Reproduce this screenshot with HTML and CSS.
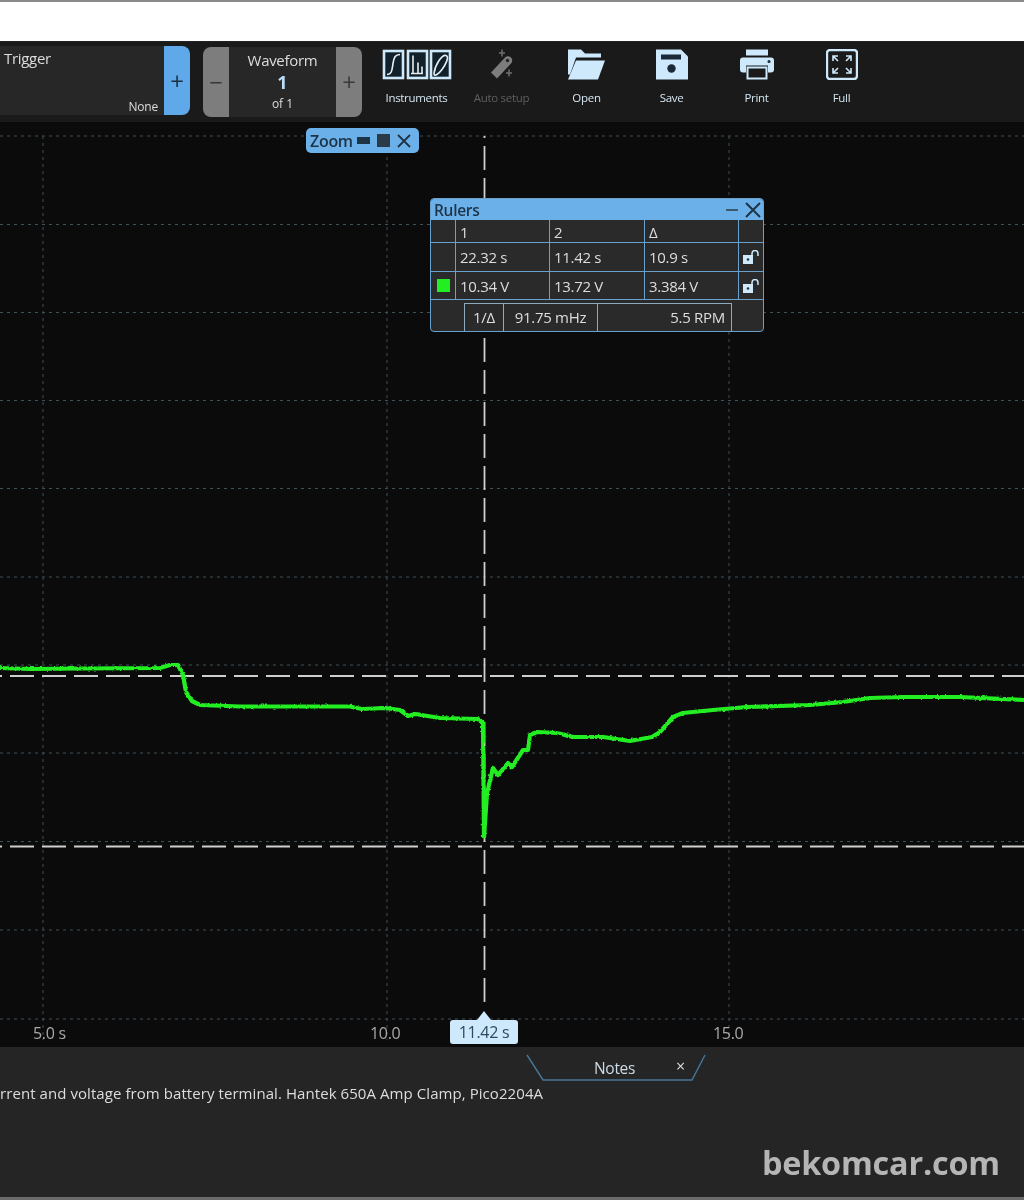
FILE: index.html
```html
<!DOCTYPE html>
<html lang="en">
<head>
  <meta charset="UTF-8">
  <title>Scope capture</title>
  <link rel="stylesheet" href="styles.css">
</head>
<body>
  <div class="top-strip"></div>

  <div class="toolbar">
    <div class="trigger">
      <div class="trigger-body">
        <span class="trigger-title">Trigger</span>
        <span class="trigger-value">None</span>
      </div>
      <button class="step step-blue">+</button>
    </div>

    <div class="waveform">
      <button class="step step-left">&minus;</button>
      <div class="waveform-body">
        <span class="waveform-title">Waveform</span>
        <span class="waveform-num">1</span>
        <span class="waveform-of">of 1</span>
      </div>
      <button class="step step-right">+</button>
    </div>

    <div class="tools">
      <div class="tool">
        <svg width="70" height="30" viewBox="0 0 70 30">
          <g fill="#12202a" stroke="#cde9fb" stroke-width="2.600">
            <rect x="2" y="1.500" width="19" height="27"/>
            <rect x="26" y="1.500" width="19" height="27"/>
            <rect x="49" y="1.500" width="19" height="27"/>
          </g>
          <g fill="none" stroke="#e4eef5" stroke-width="1.600">
            <path d="M5 25C10 25 10 20 11 14S13 5 18 5"/>
            <path d="M29 24H41M31 24V6M36 24V13M40 24V17"/>
            <path d="M52 24C53 15 60 5 64 6S63 16 60 20 52 28 52 24Z"/>
          </g>
        </svg>
        <span class="tool-label">Instruments</span>
      </div>
      <div class="tool tool-off">
        <svg width="30" height="30" viewBox="0 0 30 30">
          <path d="M4 23L18 8a3 3 0 0 1 6 6L10 29Z" fill="#7d7d7d"/>
          <circle cx="20.500" cy="11" r="1.700" fill="#222"/>
          <path d="M15 0V7M12 3.500H18M22 20V27M19 23.500H25" stroke="#6f6f6f" stroke-width="1.500" fill="none"/>
        </svg>
        <span class="tool-label">Auto setup</span>
      </div>
      <div class="tool">
        <svg width="37" height="30" viewBox="0 0 37 30">
          <path d="M0 0H13L17 4H33V8H8L2 25H0Z" fill="#cde9fb"/>
          <path d="M8 11H37L30 30H0Z" fill="#cde9fb"/>
        </svg>
        <span class="tool-label">Open</span>
      </div>
      <div class="tool">
        <svg width="32" height="30" viewBox="0 0 32 30">
          <path d="M0 0H25L32 7V30H0Z" fill="#cde9fb"/>
          <rect x="5" y="5" width="20" height="5" fill="#1a2a36"/>
          <circle cx="15.500" cy="19" r="4.200" fill="#1a2a36"/>
        </svg>
        <span class="tool-label">Save</span>
      </div>
      <div class="tool">
        <svg width="34" height="30" viewBox="0 0 34 30">
          <rect x="6" y="0" width="22" height="6" fill="#cde9fb"/>
          <path d="M3 8H31a3 3 0 0 1 3 3V20a3 3 0 0 1-3 3H28V16H6V23H3a3 3 0 0 1-3-3V11a3 3 0 0 1 3-3Z" fill="#cde9fb"/>
          <circle cx="29" cy="12" r="1.500" fill="#1a2a36"/>
          <path d="M7.500 18H26.500V29H7.500Z" fill="#1a1a1a" stroke="#cde9fb" stroke-width="2"/>
          <rect x="10" y="20.500" width="14" height="3" fill="#1a1a1a"/>
        </svg>
        <span class="tool-label">Print</span>
      </div>
      <div class="tool">
        <svg width="32" height="31" viewBox="0 0 32 31">
          <rect x="1" y="1" width="30" height="29" rx="3" fill="#1a1a1a" stroke="#cde9fb" stroke-width="2.400"/>
          <g fill="none" stroke="#cde9fb" stroke-width="1.600">
            <path d="M7 12V7H12M7 7L12 12M25 12V7H20M25 7L20 12M7 19V24H12M7 24L12 19M25 19V24H20M25 24L20 19"/>
          </g>
        </svg>
        <span class="tool-label">Full</span>
      </div>
    </div>
  </div>

  <div class="plot">
    <svg class="plot-svg" width="1024" height="925" viewBox="0 122 1024 925">
      <defs>
        <filter id="noise" x="-2%" y="-10%" width="104%" height="120%">
          <feTurbulence type="fractalNoise" baseFrequency="0.35" numOctaves="2" seed="4"/>
          <feDisplacementMap in="SourceGraphic" scale="2.600" xChannelSelector="R" yChannelSelector="G"/>
        </filter>
      </defs>
      <g class="grid">
        <path d="M0 136H1024M0 224.500H1024M0 312.500H1024M0 400.500H1024M0 488.500H1024M0 577H1024M0 665H1024M0 753H1024M0 841.500H1024M0 930H1024M0 1019H1024"/>
        <path d="M43 136V1040M387 136V1040M729 136V1040"/>
      </g>
      <g class="rulers">
        <path d="M0 676H1024M0 846.500H1024"/>
        <path class="ruler-v" d="M484.500 136V1010"/>
      </g>
      <polyline class="trace" filter="url(#noise)" points="0,668 30,669 80,668.500 160,668 170,665 178,665 183,675 186,692 192,701 200,705 240,706.500 350,706.500 362,709 385,708 400,710 408,716 415,714 440,718 478,719 483,723 484,837 487,793 493,768 498,775 508,763 512,767 523,750 528,750 530,735 537,732 557,733 573,737 603,737 630,741 652,737 660,732 673,717 683,713 713,710 747,707 810,705 843,702 870,698 903,697 960,697 1024,700"/>
    </svg>

    <span class="axis-label axis-5">5.0 s</span>
    <span class="axis-label axis-10">10.0</span>
    <span class="axis-label axis-15">15.0</span>
    <div class="marker">11.42 s</div>

    <div class="zoom-chip">
      <span class="zoom-text">Zoom</span>
      <span class="zoom-min"></span>
      <span class="zoom-max"></span>
      <svg width="14" height="14" viewBox="0 0 14 14"><path d="M1 1L13 13M13 1L1 13" stroke="#1d3346" stroke-width="1.800"/></svg>
    </div>

    <div class="ruler-win">
      <div class="ruler-title">
        <span>Rulers</span>
        <span class="ruler-min"></span>
        <svg width="16" height="16" viewBox="0 0 16 16"><path d="M1 1L15 15M15 1L1 15" stroke="#1d3346" stroke-width="2"/></svg>
      </div>
      <div class="ruler-grid">
        <div class="cell"></div><div class="cell">1</div><div class="cell">2</div><div class="cell">&Delta;</div><div class="cell"></div>
        <div class="cell"></div><div class="cell">22.32 s</div><div class="cell">11.42 s</div><div class="cell">10.9 s</div>
        <div class="cell cell-icon">
          <svg width="17" height="14" viewBox="0 0 17 14"><rect x="0" y="5" width="10" height="9" fill="#cde9fb"/><circle cx="5" cy="9.500" r="1.300" fill="#333"/><path d="M9 5V3.500a3 3 0 0 1 6 0V6" fill="none" stroke="#cde9fb" stroke-width="1.500"/></svg>
        </div>
        <div class="cell cell-icon"><span class="swatch"></span></div><div class="cell">10.34 V</div><div class="cell">13.72 V</div><div class="cell">3.384 V</div>
        <div class="cell cell-icon">
          <svg width="17" height="14" viewBox="0 0 17 14"><rect x="0" y="5" width="10" height="9" fill="#cde9fb"/><circle cx="5" cy="9.500" r="1.300" fill="#333"/><path d="M9 5V3.500a3 3 0 0 1 6 0V6" fill="none" stroke="#cde9fb" stroke-width="1.500"/></svg>
        </div>
      </div>
      <div class="ruler-foot">
        <div class="foot-cell foot-inv">1/&Delta;</div>
        <div class="foot-cell foot-hz">91.75 mHz</div>
        <div class="foot-cell foot-rpm">5.5 RPM</div>
      </div>
    </div>
  </div>

  <div class="notes">
    <div class="notes-tab">
      <svg class="tab-shape" width="180" height="28" viewBox="0 0 180 28"><path d="M1 1L17 26H166L179 1" fill="none" stroke="#47779c" stroke-width="1.400"/></svg>
      <span class="tab-text">Notes</span>
      <span class="tab-close">&times;</span>
    </div>
    <p class="notes-text">rrent and voltage from battery terminal. Hantek 650A Amp Clamp, Pico2204A</p>
    <div class="watermark">bekomcar.com</div>
  </div>
</body>
</html>
```

FILE: styles.css
```css
* {
  box-sizing: border-box;
}
body {
  margin: 0;
  width: 1024px;
  height: 1200px;
  overflow: hidden;
  font-family: "Open Sans", "Noto Sans", sans-serif;
  background: #252525;
  color: #ddd;
  filter: blur(0.35px);
}
button {
  font-family: inherit;
  border: 0;
  padding: 0;
}

.top-strip {
  height: 42px;
  background: #fff;
  border-top: 2px solid #8a8a8a;
  border-bottom: 1px solid #222;
}

/* toolbar */
.toolbar {
  height: 80px;
  display: flex;
  padding-top: 4px;
  background: #1a1a1a;
}
.trigger {
  display: flex;
  width: 190px;
  height: 69px;
}
.trigger-body {
  flex: 1;
  background: #272727;
  display: flex;
  flex-direction: column;
  justify-content: space-between;
  padding: 2px 6px 0 4px;
}
.trigger-title {
  font-size: 15px;
  letter-spacing: -0.3px;
  color: #ddd;
}
.trigger-value {
  font-size: 12px;
  letter-spacing: -0.2px;
  text-align: right;
  color: #ddd;
}
.step {
  width: 26px;
  font-size: 24px;
  line-height: 24px;
  color: #1d2f3f;
}
.step-blue {
  background: #5fa8ea;
  border-radius: 0 8px 8px 0;
}
.waveform {
  display: flex;
  width: 159px;
  height: 70px;
  margin-left: 13px;
  margin-top: 1px;
}
.step-left {
  background: #7d7d7d;
  color: #3a3a3a;
  border-radius: 8px 0 0 8px;
}
.step-right {
  background: #7d7d7d;
  color: #3a3a3a;
  border-radius: 0 8px 8px 0;
}
.waveform-body {
  flex: 1;
  background: #272727;
  display: flex;
  flex-direction: column;
  align-items: center;
  padding-top: 3px;
}
.waveform-title {
  font-size: 15px;
  line-height: 20px;
  letter-spacing: -0.3px;
  color: #ddd;
}
.waveform-num {
  font-size: 18px;
  line-height: 24px;
  font-weight: 700;
  color: #bcdcf5;
}
.waveform-of {
  font-size: 12px;
  line-height: 20px;
  color: #ddd;
}
.tools {
  display: flex;
  margin-left: 12px;
}
.tool {
  width: 85px;
  display: flex;
  flex-direction: column;
  align-items: center;
  padding-top: 3px;
}
.tool svg {
  height: 31px;
  display: block;
}
.tool-label {
  margin-top: 10px;
  font-size: 11.5px;
  line-height: 16px;
  letter-spacing: -0.3px;
  color: #d5e6f2;
}
.tool-off .tool-label {
  color: #5f5f5f;
}

/* plot */
.plot {
  position: relative;
  height: 925px;
  background: #0b0b0c;
}
.plot-svg {
  display: block;
}
.grid path {
  fill: none;
  stroke: #3d5158;
  stroke-width: 1;
  stroke-dasharray: 3 4;
}
.rulers path {
  fill: none;
  stroke: #cfcfcf;
  stroke-width: 1.800;
  stroke-dasharray: 24 8;
  stroke-dashoffset: 22;
}
.trace {
  fill: none;
  stroke: #22ee22;
  stroke-width: 4.200;
  stroke-linejoin: round;
}
.axis-label {
  position: absolute;
  top: 902px;
  font-size: 16px;
  line-height: 18px;
  letter-spacing: -0.3px;
  color: #a9a9a9;
}
.axis-5 {
  left: 33px;
}
.axis-10 {
  left: 370px;
}
.axis-15 {
  left: 713px;
}
.marker {
  position: absolute;
  left: 450px;
  top: 898px;
  width: 68px;
  height: 24px;
  background: #cde9fb;
  border-radius: 3px;
  font-size: 16px;
  line-height: 24px;
  letter-spacing: -0.3px;
  text-align: center;
  color: #2b4a60;
}
.marker::before {
  content: "";
  position: absolute;
  left: 27px;
  top: -9px;
  border-left: 7px solid transparent;
  border-right: 7px solid transparent;
  border-bottom: 9px solid #cde9fb;
}

.zoom-chip {
  position: absolute;
  left: 306px;
  top: 6px;
  width: 113px;
  height: 25px;
  background: #6cb0ea;
  border-radius: 5px;
  display: flex;
  align-items: center;
  padding-left: 4px;
}
.zoom-text {
  font-size: 16px;
  font-weight: 600;
  letter-spacing: -0.3px;
  color: #1d3346;
}
.zoom-min {
  width: 13px;
  height: 7px;
  margin-left: 4px;
  background: #1d3346;
}
.zoom-max {
  width: 13px;
  height: 13px;
  margin-left: 7px;
  background: #2b3a46;
}
.zoom-chip svg {
  margin-left: 7px;
}

/* rulers window */
.ruler-win {
  position: absolute;
  left: 430px;
  top: 76px;
  width: 334px;
  height: 134px;
  background: #2a2a2a;
  border: 1px solid #6aa0cc;
  border-radius: 4px;
  overflow: hidden;
}
.ruler-title {
  height: 21px;
  background: #6cb0ea;
  display: flex;
  align-items: center;
  padding: 0 2px 0 3px;
  font-size: 15.5px;
  font-weight: 600;
  letter-spacing: -0.3px;
  color: #1d3346;
}
.ruler-min {
  width: 12px;
  height: 2px;
  margin-left: auto;
  margin-right: 7px;
  background: #3b5a72;
}
.ruler-grid {
  display: grid;
  grid-template-columns: 25px 94px 95px 94px 24px;
  grid-template-rows: 23px 29px 27px;
  border-bottom: 1px solid #6aa0cc;
}
.cell {
  border-bottom: 1px solid #6aa0cc;
  border-right: 1px solid #6aa0cc;
  padding-left: 4px;
  font-size: 15px;
  line-height: 28px;
  letter-spacing: -0.3px;
  color: #ddd;
}
.cell:nth-child(-n+5) {
  line-height: 24px;
}
.cell:nth-child(5n) {
  border-right: 0;
}
.cell:nth-last-child(-n+5) {
  border-bottom: 0;
}
.cell-icon {
  padding: 0;
  display: flex;
  align-items: center;
  justify-content: center;
}
.swatch {
  width: 13px;
  height: 13px;
  background: #22ee22;
}
.ruler-foot {
  display: flex;
  margin: 3px 0 0 33px;
  height: 29px;
}
.foot-cell {
  border: 1px solid #8fa9bd;
  border-bottom: 0;
  margin-right: -1px;
  font-size: 15px;
  line-height: 27px;
  letter-spacing: -0.3px;
  color: #ddd;
}
.foot-inv {
  width: 40px;
  text-align: center;
}
.foot-hz {
  width: 95px;
  text-align: center;
}
.foot-rpm {
  width: 135px;
  padding-right: 6px;
  text-align: right;
}

/* notes panel */
.notes {
  position: relative;
  height: 153px;
  padding-top: 7px;
  background: #252525;
  border-bottom: 3px solid #6a6a6a;
}
.notes-tab {
  position: relative;
  width: 180px;
  height: 28px;
  margin-left: 526px;
}
.tab-shape {
  position: absolute;
  left: 0;
  top: 0;
}
.tab-text {
  position: absolute;
  left: 68px;
  top: 5px;
  font-size: 15.5px;
  line-height: 18px;
  letter-spacing: -0.3px;
  color: #ccdbe6;
}
.tab-close {
  position: absolute;
  left: 150px;
  top: 3px;
  font-size: 16px;
  line-height: 18px;
  color: #ddd;
}
.notes-text {
  margin: 2px 0 0;
  font-size: 15px;
  line-height: 18px;
  letter-spacing: 0.07px;
  white-space: nowrap;
  color: #ddd;
}
.watermark {
  position: absolute;
  left: 762px;
  top: 96px;
  font-size: 32.4px;
  line-height: 38px;
  font-weight: 700;
  letter-spacing: -0.2px;
  color: #b5b5b5;
}
```
